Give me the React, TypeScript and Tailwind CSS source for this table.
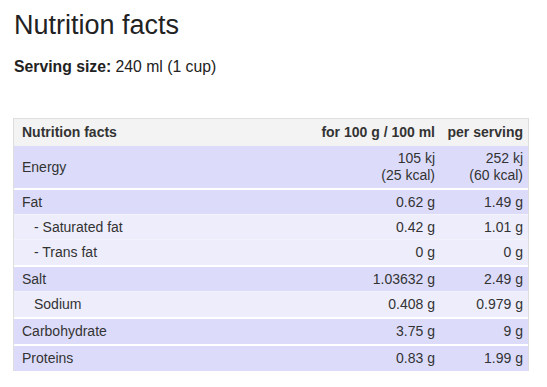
import type { ReactNode } from "react";

type Row = {
  label: string;
  per100: ReactNode;
  perServing: ReactNode;
  sub?: boolean;
  tall?: boolean;
};

const groups: Row[][] = [
  [
    {
      label: "Energy",
      per100: (
        <>
          105 kj
          <br />
          (25 kcal)
        </>
      ),
      perServing: (
        <>
          252 kj
          <br />
          (60 kcal)
        </>
      ),
      tall: true,
    },
  ],
  [
    { label: "Fat", per100: "0.62 g", perServing: "1.49 g" },
    { label: "- Saturated fat", per100: "0.42 g", perServing: "1.01 g", sub: true },
    { label: "- Trans fat", per100: "0 g", perServing: "0 g", sub: true },
  ],
  [
    { label: "Salt", per100: "1.03632 g", perServing: "2.49 g" },
    { label: "Sodium", per100: "0.408 g", perServing: "0.979 g", sub: true },
  ],
  [{ label: "Carbohydrate", per100: "3.75 g", perServing: "9 g" }],
  [{ label: "Proteins", per100: "0.83 g", perServing: "1.99 g" }],
];

function NutrientRow({ row, last }: { row: Row; last: boolean }) {
  return (
    <div
      className={`grid grid-cols-[1fr_124px_88px] ${row.sub ? "bg-[#ededfc]" : "bg-[#dcdcfa]"} ${
        row.tall ? "h-[42px]" : "h-[25px]"
      } ${last ? "" : "border-b border-[#f3f3fe]"}`}
    >
      <div className={`flex items-center ${row.sub ? "pl-[20px]" : "pl-[8px]"}`}>{row.label}</div>
      <div className="flex items-center justify-end pr-[5px] text-right">
        <span>{row.per100}</span>
      </div>
      <div className="flex items-center justify-end pr-[5px] text-right">
        <span>{row.perServing}</span>
      </div>
    </div>
  );
}

export default function App() {
  return (
    <div
      className="min-h-screen bg-white pl-[13px] pt-[10px] text-[#222]"
      style={{ fontFamily: '"Liberation Sans", Arial, sans-serif' }}
    >
      <h1 className="pl-px text-[27px] font-normal leading-[31px]">Nutrition facts</h1>
      <p className="mt-[17px] pl-px text-[15.75px] leading-[18px]">
        <span className="font-bold">Serving size:</span> 240 ml (1 cup)
      </p>

      <div className="mt-[42px] w-[516px] border-x border-t border-[#dedede] text-[14px] leading-[17px] text-[#333]">
        <div className="grid h-[27px] grid-cols-[1fr_124px_88px] bg-[#f3f3f3] font-bold">
          <div className="flex items-center pl-[8px]">Nutrition facts</div>
          <div className="flex items-center justify-end pr-[5px]">for 100 g / 100 ml</div>
          <div className="flex items-center justify-end pr-[5px]">per serving</div>
        </div>
        <div className="flex flex-col gap-[2px] bg-white">
          {groups.map((group, gi) => (
            <div key={gi} className="flex flex-col">
              {group.map((row, ri) => (
                <NutrientRow key={row.label} row={row} last={ri === group.length - 1} />
              ))}
            </div>
          ))}
        </div>
      </div>
    </div>
  );
}
